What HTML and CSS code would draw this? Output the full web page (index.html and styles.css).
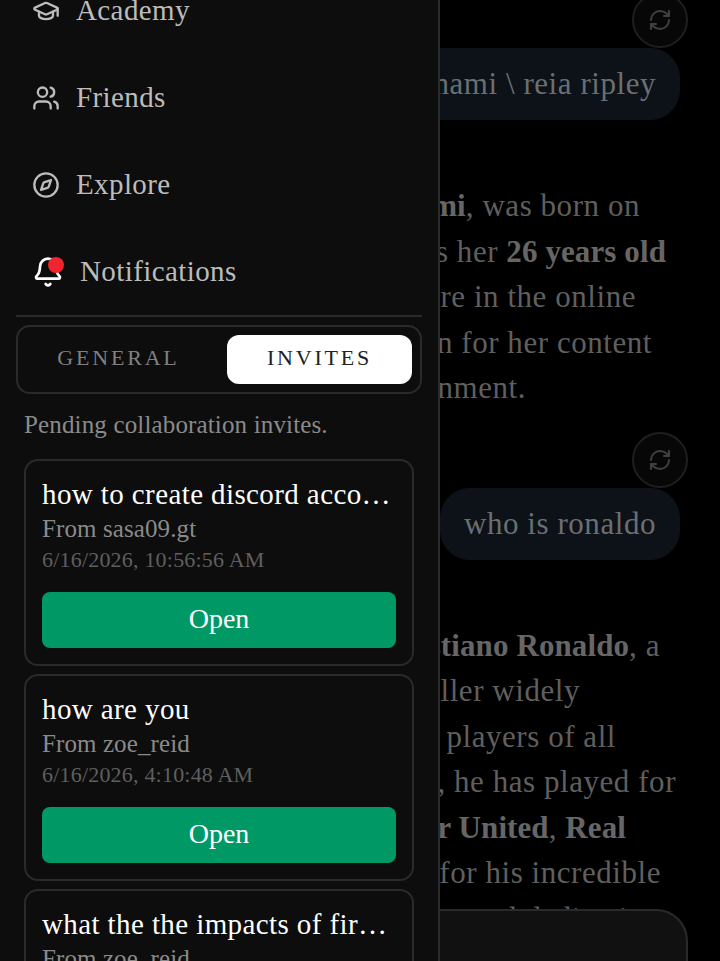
FILE: index.html
```html
<!DOCTYPE html>
<html lang="en">
<head>
    <meta charset="UTF-8">
    <title>Invites</title>
    <meta name="viewport" content="width=device-width,initial-scale=1">
    <link rel="stylesheet" href="styles.css">
</head>
<body>
    <div class="wrap">
        <!-- chat behind the drawer -->
        <div class="chat">
            <button type="button" class="regen">
                <svg viewBox="0 0 24 24"><path d="M3 12a9 9 0 0 1 9-9 9.75 9.75 0 0 1 6.74 2.74L21 8"/><path d="M21 3v5h-5"/><path d="M21 12a9 9 0 0 1-9 9 9.75 9.75 0 0 1-6.74-2.74L3 16"/><path d="M8 16H3v5"/></svg>
            </button>
            <div class="bubble">who is sara nami \ reia ripley</div>
            <div class="answer">
                <span class="line end-1">Reia Ripley, also <b>Sara Nami</b>, was born on</span>
                <span class="line end-2">March 2000, which makes her <b>26 years old</b></span>
                <span class="line end-3">She is a known figure in the online</span>
                <span class="line end-4">community, known for her content</span>
                <span class="line end-5">and her entertainment.</span>
            </div>
            <button type="button" class="regen">
                <svg viewBox="0 0 24 24"><path d="M3 12a9 9 0 0 1 9-9 9.75 9.75 0 0 1 6.74 2.74L21 8"/><path d="M21 3v5h-5"/><path d="M21 12a9 9 0 0 1-9 9 9.75 9.75 0 0 1-6.74-2.74L3 16"/><path d="M8 16H3v5"/></svg>
            </button>
            <div class="bubble">who is ronaldo</div>
            <div class="answer">
                <span class="line end-6">The player is <b>Cristiano Ronaldo</b>, a</span>
                <span class="line end-7">Portuguese footballer widely</span>
                <span class="line end-8">one of the greatest players of all</span>
                <span class="line end-9">In his long career, he has played for</span>
                <span class="line end-10">clubs like <b>Manchester United</b>, <b>Real</b></span>
                <span class="line end-11">Madrid, and known for his incredible</span>
                <span class="line end-12">goal scoring and dedication</span>
            </div>
        </div>
        <div class="composer"></div>

        <!-- drawer -->
        <div class="drawer">
            <ul class="nav">
                <li>
                    <svg class="nav-icon" viewBox="0 0 24 24"><path d="M21.42 10.922a1 1 0 0 0-.019-1.838L12.83 5.18a2 2 0 0 0-1.66 0L2.6 9.08a1 1 0 0 0 0 1.832l8.57 3.908a2 2 0 0 0 1.66 0z"/><path d="M22 10v6"/><path d="M6 12.5V16a6 3 0 0 0 12 0v-3.5"/></svg>
                    <span class="nav-label">Academy</span>
                </li>
                <li>
                    <svg class="nav-icon" viewBox="0 0 24 24"><path d="M16 21v-2a4 4 0 0 0-4-4H6a4 4 0 0 0-4 4v2"/><circle cx="9" cy="7" r="4"/><path d="M22 21v-2a4 4 0 0 0-3-3.87"/><path d="M16 3.13a4 4 0 0 1 0 7.75"/></svg>
                    <span class="nav-label">Friends</span>
                </li>
                <li>
                    <svg class="nav-icon" viewBox="0 0 24 24"><path d="m16.24 7.76-1.804 5.411a2 2 0 0 1-1.265 1.265L7.76 16.24l1.804-5.411a2 2 0 0 1 1.265-1.265z"/><circle cx="12" cy="12" r="10"/></svg>
                    <span class="nav-label">Explore</span>
                </li>
                <li>
                    <span class="bell">
                        <svg class="nav-icon" viewBox="0 0 24 24"><path d="M10.268 21a2 2 0 0 0 3.464 0"/><path d="M3.262 15.326A1 1 0 0 0 4 17h16a1 1 0 0 0 .74-1.673C19.41 13.956 18 12.499 18 8A6 6 0 0 0 6 8c0 4.499-1.411 5.956-2.738 7.326"/></svg>
                        <span class="dot"></span>
                    </span>
                    <span class="nav-label">Notifications</span>
                </li>
            </ul>

            <div class="tabs">
                <button type="button" class="tab">General</button>
                <button type="button" class="tab is-active">Invites</button>
            </div>

            <p class="hint">Pending collaboration invites.</p>

            <div class="invite">
                <h3 class="invite-title">how to create discord account</h3>
                <div class="invite-from">From sasa09.gt</div>
                <div class="invite-date">6/16/2026, 10:56:56 AM</div>
                <button type="button" class="open-btn">Open</button>
            </div>
            <div class="invite">
                <h3 class="invite-title">how are you</h3>
                <div class="invite-from">From zoe_reid</div>
                <div class="invite-date">6/16/2026, 4:10:48 AM</div>
                <button type="button" class="open-btn">Open</button>
            </div>
            <div class="invite">
                <h3 class="invite-title">what the the impacts of fire on forests</h3>
                <div class="invite-from">From zoe_reid</div>
                <div class="invite-date">6/16/2026, 4:02:11 AM</div>
                <button type="button" class="open-btn">Open</button>
            </div>
        </div>
    </div>
</body>
</html>
```

FILE: styles.css
```css
html, body {margin:0;height:100%;background:#000;}
body {font-family:"Liberation Serif","Times New Roman",serif;font-size:31px;letter-spacing:.55px;color:#5f5f5f;}
ul {list-style:none;margin:0;padding:0;}
h3, p {margin:0;}
button {font-family:inherit;cursor:pointer;}

.wrap {position:relative;height:961px;overflow:hidden;}

/* chat */
.chat {display:flex;flex-direction:column;align-items:flex-end;margin-top:-8px;padding-right:32px;}
.regen {display:flex;align-items:center;justify-content:center;width:56px;height:56px;padding:0;background:#070707;border:2px solid #1f1f1f;border-radius:50%;}
.regen svg {width:24px;height:24px;fill:none;stroke:#404040;stroke-width:2;stroke-linecap:round;stroke-linejoin:round;}
.bubble {height:72px;line-height:72px;margin-right:8px;padding:0 24px;border-radius:30px;background:#0c1217;color:#6a6f73;white-space:nowrap;}
.answer {align-self:stretch;margin:63px -32px 21px 0;}
.line {display:block;height:45.5px;line-height:45.5px;text-align:right;white-space:nowrap;}
.line b {color:#666;letter-spacing:.1px;}
.end-1 {padding-right:80px;}
.end-2 {padding-right:54px;}
.end-3 {padding-right:84px;}
.end-4 {padding-right:68px;}
.end-5 {padding-right:194px;}
.end-6 {padding-right:60px;}
.end-7 {padding-right:140px;}
.end-8 {padding-right:104px;}
.end-9 {padding-right:44px;}
.end-10 {padding-right:94px;}
.end-11 {padding-right:59px;}
.end-12 {padding-right:60px;}

.composer {position:absolute;left:380px;right:32px;top:909px;height:90px;background:#111;border:2px solid #2a2a2a;border-radius:32px;}

/* drawer */
.drawer {position:absolute;top:0;bottom:0;left:0;width:438px;background:#0d0d0e;border-right:2px solid #2a2a2a;letter-spacing:0;}
.nav {margin:-33px 16px 0;border-bottom:2px solid #2a2a2a;}
.nav li {display:flex;align-items:center;gap:16px;height:87px;padding-left:16px;color:#bcbcbc;}
.nav-label {font-size:29px;letter-spacing:.4px;}
.nav-icon {display:block;width:28px;height:28px;flex:none;fill:none;stroke:#bcbcbc;stroke-width:2;stroke-linecap:round;stroke-linejoin:round;}
.bell {position:relative;display:block;}
.bell .nav-icon {width:32px;height:32px;stroke:#fff;}
.dot {position:absolute;top:1px;right:0;width:16px;height:16px;border-radius:50%;background:#f0252d;}

.tabs {display:flex;gap:16px;margin:8px 16px 0;padding:8px;border:2px solid #2a2a2a;border-radius:14px;}
.tab {flex:1;height:49px;padding:0 0 3px;background:none;border:0;border-radius:12px;color:#808080;font-size:22px;letter-spacing:2.8px;text-transform:uppercase;}
.tab.is-active {background:#fff;color:#222;}

.hint {margin:17px 24px 0;font-size:25px;letter-spacing:.15px;line-height:28px;color:#8a8a8a;}

.invite {margin:20px 24px 0;padding:16px;border:2px solid #2a2a2a;border-radius:14px;}
.invite + .invite {margin-top:8px;}
.invite-title {overflow:hidden;font-size:29px;font-weight:normal;letter-spacing:.4px;line-height:34px;color:#fff;white-space:nowrap;text-overflow:ellipsis;}
.invite-from {margin-top:2px;font-size:25px;letter-spacing:.1px;line-height:32px;color:#8a8a8a;}
.invite-date {font-size:22px;letter-spacing:.2px;line-height:30px;color:#5f5f5f;}
.open-btn {display:block;width:100%;height:56px;margin-top:17px;padding:0 0 3px;background:#096;border:0;border-radius:8px;color:#fff;font-size:28px;}
```
